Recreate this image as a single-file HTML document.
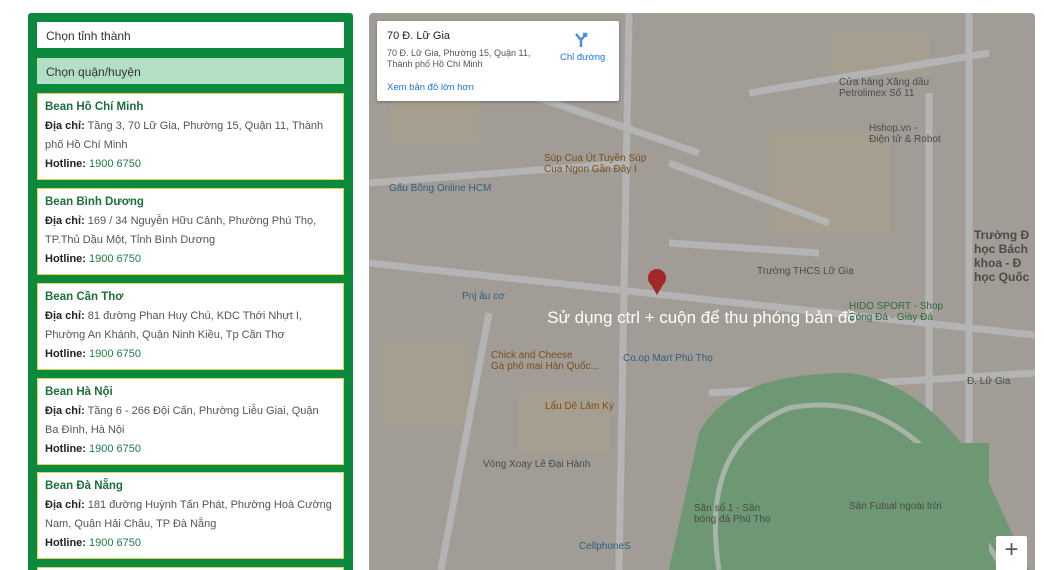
<!DOCTYPE html>
<html><head><meta charset="utf-8"><style>
*{box-sizing:border-box;margin:0;padding:0}
html,body{width:1044px;height:570px;overflow:hidden}
body{background:#fff;font-family:"Liberation Sans",sans-serif;position:relative}
.panel{position:absolute;left:28px;top:13px;width:325px;height:557px;background:#0b8a3e;border-radius:3px 3px 0 0;overflow:hidden}
.inp{position:absolute;left:9px;width:307px;height:26px;font-size:12px;color:#333;padding:7px 9px}
.card{position:absolute;left:9px;width:307px;height:87px;background:#fff;border:1px solid #e3d35a;padding:6px 7px;font-size:11px;color:#555;line-height:19px}
.card h4{color:#1d6f3c;font-size:11.5px;font-weight:bold;line-height:14px;margin-bottom:3px}
.card b{color:#222}
.card .h{color:#1d7f44}
.map{position:absolute;left:369px;top:13px;width:666px;height:557px;border-radius:4px 4px 0 0;overflow:hidden;background:#a19d96}
.lbl{position:absolute;font-size:10px;color:#4a4a4a}
</style></head><body>
<div class="panel">
 <div class="inp" style="top:9px;background:#fff">Chọn tỉnh thành</div>
 <div class="inp" style="top:45px;background:#b3dfc5">Chọn quận/huyện</div>
 <div class="card" style="top:80px"><h4>Bean Hồ Chí Minh</h4><b>Địa chỉ:</b> Tầng 3, 70 Lữ Gia, Phường 15, Quận 11, Thành phố Hồ Chí Minh<br><b>Hotline:</b> <span class="h">1900 6750</span></div>
 <div class="card" style="top:175px"><h4>Bean Bình Dương</h4><b>Địa chỉ:</b> 169 / 34 Nguyễn Hữu Cảnh, Phường Phú Thọ, TP.Thủ Dầu Một, Tỉnh Bình Dương<br><b>Hotline:</b> <span class="h">1900 6750</span></div>
 <div class="card" style="top:270px"><h4>Bean Cần Thơ</h4><b>Địa chỉ:</b> 81 đường Phan Huy Chú, KDC Thới Nhựt I, Phường An Khánh, Quận Ninh Kiều, Tp Cần Thơ<br><b>Hotline:</b> <span class="h">1900 6750</span></div>
 <div class="card" style="top:365px"><h4>Bean Hà Nội</h4><b>Địa chỉ:</b> Tầng 6 - 266 Đội Cấn, Phường Liễu Giai, Quận<br>Ba Đình, Hà Nội<br><b>Hotline:</b> <span class="h">1900 6750</span></div>
 <div class="card" style="top:459px"><h4>Bean Đà Nẵng</h4><b>Địa chỉ:</b> 181 đường Huỳnh Tấn Phát, Phường Hoà Cường Nam, Quận Hải Châu, TP Đà Nẵng<br><b>Hotline:</b> <span class="h">1900 6750</span></div>
 <div class="card" style="top:554px;height:3px;padding:0;border-bottom:0"></div>
</div>
<div class="map">
 <svg width="666" height="557" style="position:absolute;left:0;top:0">
  <g fill="#a89f8c" opacity=".7">
   <rect x="20" y="60" width="90" height="70"/><rect x="400" y="120" width="120" height="100"/><rect x="150" y="380" width="90" height="60"/><rect x="460" y="20" width="100" height="40"/><rect x="10" y="330" width="90" height="80"/>
  </g>
  <g stroke="#b4b4b4" stroke-width="7" fill="none">
   <path d="M0 250 L666 322"/><path d="M260 0 L250 557"/><path d="M120 300 L72 557"/>
   <path d="M300 230 L450 240"/><path d="M40 40 L330 140"/><path d="M560 80 L560 400"/>
   <path d="M380 80 L620 40"/><path d="M0 170 L260 150"/><path d="M340 380 L666 360"/>
   <path d="M300 150 L460 210"/><path d="M600 0 L600 557"/>
  </g>
  <path d="M330 420 Q360 360 480 360 Q560 370 620 470 L660 557 L300 557 Z" fill="#6d9873"/>
  <path d="M350 557 Q330 430 420 395 Q500 380 560 440 L635 557" stroke="#a8b4a8" stroke-width="5" fill="none"/>
  <rect x="470" y="430" width="150" height="127" fill="#6d9873"/>
  <circle cx="288" cy="265" r="9" fill="#a3262a"/><path d="M280 268 L288 282 L296 268Z" fill="#a3262a"/>
 </svg>
 <div class="lbl" style="left:175px;top:140px;color:#7a4e1a">Súp Cua Út Tuyền Súp<br>Cua Ngon Gần Đây I</div>
 <div class="lbl" style="left:20px;top:170px;color:#2f5e7e">Gấu Bông Online HCM</div>
 <div class="lbl" style="left:93px;top:278px;color:#2f5e7e">Pnj âu cơ</div>
 <div class="lbl" style="left:122px;top:337px;color:#7a4e1a">Chick and Cheese<br>Gà phô mai Hàn Quốc...</div>
 <div class="lbl" style="left:254px;top:340px;color:#2f5e7e">Co.op Mart Phú Thọ</div>
 <div class="lbl" style="left:176px;top:388px;color:#7a4e1a">Lẩu Dê Lâm Ký</div>
 <div class="lbl" style="left:114px;top:446px">Vòng Xoay Lê Đại Hành</div>
 <div class="lbl" style="left:480px;top:288px;color:#2e6b3a">HIDO SPORT - Shop<br>Bóng Đá - Giày Đá</div>
 <div class="lbl" style="left:388px;top:253px">Trường THCS Lữ Gia</div>
 <div class="lbl" style="left:480px;top:488px">Sân Futsal ngoài trời</div>
 <div class="lbl" style="left:325px;top:490px">Sân số 1 - Sân<br>bóng đá Phú Thọ</div>
 <div class="lbl" style="left:210px;top:528px;color:#2f5e7e">CellphoneS</div>
 <div class="lbl" style="left:598px;top:363px">Đ. Lữ Gia</div>
 <div class="lbl" style="left:605px;top:215px;font-size:12px;font-weight:bold">Trường Đ<br>học Bách<br>khoa - Đ<br>học Quốc</div>
 <div class="lbl" style="left:470px;top:64px">Cửa hàng Xăng dầu<br>Petrolimex Số 11</div>
 <div class="lbl" style="left:500px;top:110px">Hshop.vn -<br>Điện tử & Robot</div>
 <div style="position:absolute;left:0;top:295px;width:666px;text-align:center;color:#fff;font-size:17px">Sử dụng ctrl + cuộn để thu phóng bản đồ</div>
 <div style="position:absolute;left:8px;top:8px;width:242px;height:80px;background:#fff;border-radius:2px;box-shadow:0 1px 3px rgba(0,0,0,.3)">
  <div style="position:absolute;left:10px;top:9px;font-size:11px;color:#222">70 Đ. Lữ Gia</div>
  <div style="position:absolute;left:10px;top:27px;font-size:9px;color:#555;line-height:11px">70 Đ. Lữ Gia, Phường 15, Quận 11,<br>Thành phố Hồ Chí Minh</div>
  <div style="position:absolute;left:10px;top:61px;font-size:9.5px;color:#1a73e8">Xem bản đồ lớn hơn</div>
  <svg style="position:absolute;left:196px;top:10px" width="16" height="16"><path d="M8 16 V9 L3 3 M8 9 L13 3 M10 3 H13 V6" stroke="#4a8fe0" stroke-width="2.5" fill="none"/></svg>
  <div style="position:absolute;left:183px;top:31px;font-size:9.5px;color:#1a73e8">Chỉ đường</div>
 </div>
 <div style="position:absolute;left:627px;top:523px;width:31px;height:34px;background:#fff;border-radius:2px 2px 0 0;font-size:24px;color:#555;text-align:center;line-height:28px">+</div>
</div>
</body></html>
